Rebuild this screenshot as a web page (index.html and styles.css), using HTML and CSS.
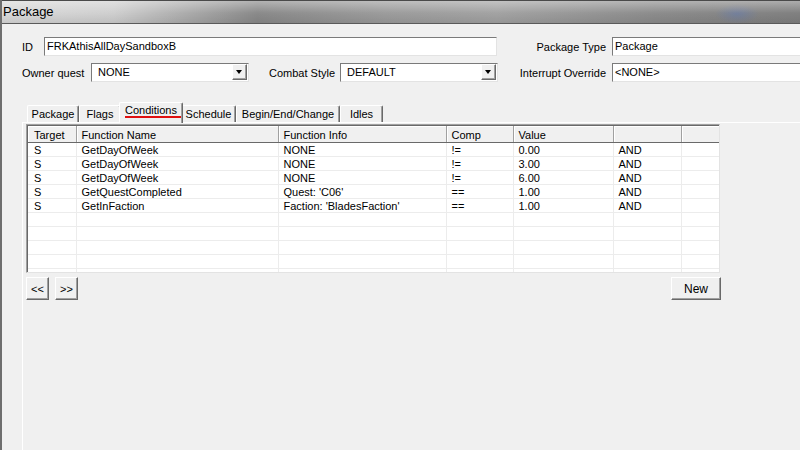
FILE: index.html
```html
<!DOCTYPE html>
<html lang="en">

<head>
    <meta charset="UTF-8" />
    <title>Package</title>
    <link rel="stylesheet" href="styles.css">
</head>

<body>
    <div class="window">
        <div class="titlebar">Package</div>

        <div class="client">
            <div class="form-row">
                <label class="lbl lbl-id">ID</label>
                <div class="field field-id">FRKAthisAllDaySandboxB</div>
                <label class="lbl lbl-right">Package Type</label>
                <div class="field field-wide">Package</div>
            </div>

            <div class="form-row">
                <label class="lbl lbl-owner">Owner quest</label>
                <div class="field combo">NONE<span class="drop"></span></div>
                <label class="lbl lbl-combat">Combat Style</label>
                <div class="field combo">DEFAULT<span class="drop"></span></div>
                <label class="lbl lbl-right lbl-int">Interrupt Override</label>
                <div class="field field-wide">&lt;NONE&gt;</div>
            </div>

            <div class="tabs">
                <div class="tab" style="width: 52px">Package</div>
                <div class="tab" style="width: 42px">Flags</div>
                <div class="tab selected" style="width: 64px"><span class="marked">Conditions</span></div>
                <div class="tab" style="width: 55px">Schedule</div>
                <div class="tab" style="width: 104px">Begin/End/Change</div>
                <div class="tab" style="width: 43px">Idles</div>
            </div>

            <div class="tab-panel">
                <div class="list">
                    <table>
                        <colgroup>
                            <col style="width: 48px">
                            <col style="width: 202px">
                            <col style="width: 168px">
                            <col style="width: 67px">
                            <col style="width: 100px">
                            <col style="width: 68px">
                            <col>
                        </colgroup>
                        <thead>
                            <tr>
                                <th class="first">Target</th>
                                <th>Function Name</th>
                                <th>Function Info</th>
                                <th>Comp</th>
                                <th>Value</th>
                                <th></th>
                                <th></th>
                            </tr>
                        </thead>
                        <tbody id="rows"></tbody>
                    </table>
                </div>

                <div class="list-buttons">
                    <div class="nav">
                        <button class="btn btn-small">&lt;&lt;</button>
                        <button class="btn btn-small">&gt;&gt;</button>
                    </div>
                    <button class="btn btn-new">New</button>
                </div>
            </div>
        </div>
    </div>

    <script>
        const conditions = [
            ["S", "GetDayOfWeek", "NONE", "!=", "0.00", "AND"],
            ["S", "GetDayOfWeek", "NONE", "!=", "3.00", "AND"],
            ["S", "GetDayOfWeek", "NONE", "!=", "6.00", "AND"],
            ["S", "GetQuestCompleted", "Quest: 'C06'", "==", "1.00", "AND"],
            ["S", "GetInFaction", "Faction: 'BladesFaction'", "==", "1.00", "AND"]
        ];

        // fill the list, padding with empty rows so the grid lines run to the bottom
        const body = document.getElementById("rows");
        for (let i = 0; i < 10; i++)
        {
            const c = conditions[i] || ["", "", "", "", "", ""];
            const tr = document.createElement("tr");
            tr.innerHTML = `
                <td class="first">${c[0]}</td>
                <td>${c[1]}</td>
                <td>${c[2]}</td>
                <td>${c[3]}</td>
                <td>${c[4]}</td>
                <td>${c[5]}</td>
                <td></td>
            `;
            body.appendChild(tr);
        }
    </script>
</body>

</html>
```

FILE: styles.css
```css
html,
body {
    margin: 0;
    padding: 0;
}

body {
    font-family: "Liberation Sans", Arial, sans-serif;
    font-size: 11px;
    color: #000;
    background: #f0f0f0;
}

.window {
    width: 800px;
    height: 450px;
    overflow: hidden;
    box-sizing: border-box;
    border-left: 2px solid #6e6e6e;
    display: flex;
    flex-direction: column;
    background: #f0f0f0;
}

.titlebar {
    height: 22px;
    flex: none;
    padding-left: 1px;
    line-height: 21px;
    font-size: 13px;
    border-top: 1px solid #4a4a4a;
    border-bottom: 1px solid #5a5a5a;
    background:
        linear-gradient(to bottom, rgba(255, 255, 255, 0.35), rgba(255, 255, 255, 0) 55%, rgba(0, 0, 0, 0.08)),
        radial-gradient(ellipse 22px 10px at 735px 13px, rgba(90, 120, 190, 0.4), rgba(90, 120, 190, 0)),
        linear-gradient(to right, #d9d9d9 0%, #cfcfcf 14%, #8a8a8a 32%, #9c9c9c 48%, #a3a3a3 62%, #8c8c8c 82%, #808080 100%);
}

.client {
    flex: 1;
    display: flex;
    flex-direction: column;
    padding: 13px 0 0 20px;
    min-height: 0;
}

/* top form rows */

.form-row {
    display: flex;
    align-items: center;
    height: 19px;
    margin-bottom: 7px;
    white-space: nowrap;
}

.lbl {
    flex: none;
}

.lbl-id {
    width: 22px;
}

.lbl-owner {
    width: 69px;
}

.lbl-combat {
    width: 71px;
    margin-left: 20px;
}

.lbl-right {
    width: 109px;
    padding-right: 6px;
    text-align: right;
}

.lbl-int {
    width: 108px;
}

.field {
    position: relative;
    flex: none;
    box-sizing: border-box;
    height: 19px;
    line-height: 17px;
    padding-left: 2px;
    background: #fff;
    border: 1px solid;
    border-color: #7a7a7a #e3e3e3 #e3e3e3 #7a7a7a;
}

.field-id {
    width: 453px;
}

.field-wide {
    width: 260px;
}

.combo {
    width: 158px;
    padding-left: 6px;
}

.drop {
    position: absolute;
    right: 1px;
    top: 0;
    width: 13px;
    height: 14px;
    background: #f0f0f0;
    border: 1px solid;
    border-color: #fff #696969 #696969 #fff;
    box-shadow: inset -1px -1px #a0a0a0;
}

.drop::after {
    content: "";
    position: absolute;
    left: 3px;
    top: 5px;
    border-left: 3.5px solid transparent;
    border-right: 3.5px solid transparent;
    border-top: 4px solid #000;
}

/* tab strip */

.tabs {
    display: flex;
    align-items: flex-end;
    height: 20px;
    margin-top: 13px;
    padding-left: 5px;
    position: relative;
    z-index: 1;
}

.tab {
    box-sizing: border-box;
    height: 17px;
    line-height: 16px;
    text-align: center;
    white-space: nowrap;
    border-top: 1px solid #fff;
    border-left: 1px solid #fff;
    border-right: 1px solid #696969;
    box-shadow: inset -1px 0 #a0a0a0;
    border-radius: 2px 2px 0 0;
}

.tab.selected {
    height: 21px;
    line-height: 15px;
    margin: 0 -2px -1px;
    padding-bottom: 4px;
    background: #f0f0f0;
    position: relative;
    z-index: 2;
}

.marked {
    position: relative;
}

.marked::after {
    content: "";
    position: absolute;
    left: 0;
    right: -4px;
    bottom: -2px;
    height: 2px;
    background: #e01010;
}

.tab-panel {
    flex: 1;
    border-top: 1px solid #fff;
    border-left: 1px solid #fff;
    padding: 1px 0 0 3px;
}

/* condition list */

.list {
    width: 694px;
    height: 149px;
    box-sizing: border-box;
    overflow: hidden;
    background: #fff;
    border: 1px solid;
    border-color: #a0a0a0 #e3e3e3 #e3e3e3 #a0a0a0;
    box-shadow: inset 1px 1px #696969;
    padding: 1px 0 0 1px;
}

.list table {
    width: 100%;
    table-layout: fixed;
    border-collapse: collapse;
}

.list th {
    height: 15px;
    padding: 1px 0 0 5px;
    font-weight: normal;
    text-align: left;
    white-space: nowrap;
    background: #f0f0f0;
    border-right: 1px solid #a0a0a0;
    border-bottom: 1px solid #696969;
    box-shadow: inset 1px 1px #fff;
}

.list th:last-child {
    border-right: none;
}

.list td {
    height: 12px;
    line-height: 12px;
    padding: 1px 0 0 5px;
    white-space: nowrap;
    overflow: hidden;
    border-right: 1px solid #ececec;
    border-bottom: 1px solid #ececec;
}

.list td:last-child {
    border-right: none;
}

.list .first {
    padding-left: 6px;
}

/* buttons below the list */

.list-buttons {
    width: 695px;
    display: flex;
    justify-content: space-between;
    margin-top: 4px;
}

.nav {
    display: flex;
    gap: 6px;
}

.btn {
    box-sizing: border-box;
    height: 23px;
    padding: 0;
    font-family: "Liberation Sans", Arial, sans-serif;
    font-size: 11px;
    color: #000;
    background: #f0f0f0;
    border: 1px solid;
    border-color: #fff #696969 #696969 #fff;
    box-shadow: inset -1px -1px #a0a0a0;
}

.btn-small {
    width: 23px;
}

.btn-new {
    width: 50px;
    font-size: 12px;
}
```
